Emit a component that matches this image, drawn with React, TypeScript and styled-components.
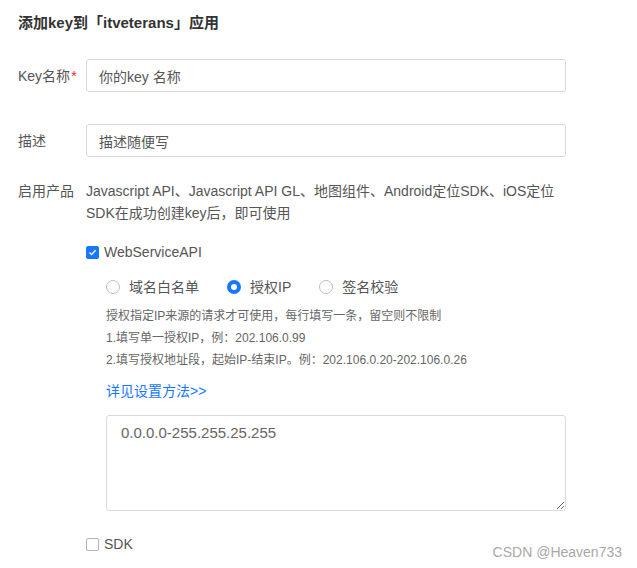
import React from "react"
import styled, { createGlobalStyle } from "styled-components"

const GlobalStyle = createGlobalStyle`
  html, body {
    margin: 0;
    padding: 0;
    background: #fff;
  }
  body {
    font-family: "Liberation Sans", "Noto Sans CJK SC", sans-serif;
    color: #333;
  }
`

const Page = styled.div`
  position: relative;
  width: 637px;
  height: 568px;
  padding: 14px 0 0 18px;
  box-sizing: border-box;
  overflow: hidden;
`

const Title = styled.h2`
  margin: 0 0 27px;
  font-size: 15px;
  line-height: 18px;
  font-weight: 600;
  color: #333;
`

const Row = styled.div<{ $gap?: number; $top?: boolean }>`
  display: grid;
  grid-template-columns: 68px 480px;
  align-items: ${p => (p.$top ? "start" : "center")};
  margin-bottom: ${p => p.$gap ?? 0}px;
`

const Label = styled.label`
  font-size: 14px;
  line-height: 22px;
  color: #555;
  white-space: nowrap;
`

const Star = styled.span`
  color: #f5222d;
  margin-left: 1px;
`

const Input = styled.input`
  box-sizing: border-box;
  width: 480px;
  height: 33px;
  padding: 0 12px;
  border: 1px solid #d9d9d9;
  border-radius: 3px;
  font-family: inherit;
  font-size: 14px;
  color: #555;
  outline: none;
`

const Products = styled.div`
  display: flex;
  flex-direction: column;
`

const ProductText = styled.div`
  font-size: 14px;
  line-height: 22px;
  color: #555;
  white-space: nowrap;
`

const CheckLine = styled.div<{ $space: number }>`
  display: flex;
  align-items: center;
  gap: 5px;
  margin-top: ${p => p.$space}px;
  font-size: 14px;
  line-height: 20px;
  color: #555;
`

const Box = styled.span<{ $checked?: boolean }>`
  box-sizing: border-box;
  width: 13px;
  height: 13px;
  border-radius: 2px;
  border: 1px solid ${p => (p.$checked ? "#1677ff" : "#b5b5b5")};
  background: ${p => (p.$checked ? "#1677ff" : "#fff")};
  display: flex;
  align-items: center;
  justify-content: center;
`

const Nested = styled.div`
  padding-left: 20px;
  display: flex;
  flex-direction: column;
`

const RadioGroup = styled.div`
  display: flex;
  align-items: center;
  margin: 15px 0 8px;
  line-height: 20px;
`

const RadioItem = styled.div`
  display: flex;
  align-items: center;
  gap: 9px;
  margin-right: 28px;
  font-size: 14px;
  color: #555;
`

const Dot = styled.span<{ $on?: boolean }>`
  box-sizing: border-box;
  width: 14px;
  height: 14px;
  border-radius: 50%;
  border: ${p => (p.$on ? "4px solid #1677ff" : "1px solid #bfbfbf")};
  background: #fff;
`

const Help = styled.div`
  font-size: 12px;
  line-height: 22px;
  color: #666;
`

const Link = styled.a`
  display: block;
  margin: 9px 0 13px;
  font-size: 14px;
  line-height: 22px;
  color: #1677ff;
  text-decoration: none;
`

const TextArea = styled.textarea`
  box-sizing: border-box;
  width: 460px;
  height: 96px;
  padding: 7px 14px;
  border: 1px solid #d9d9d9;
  border-radius: 3px;
  font-family: inherit;
  font-size: 15px;
  line-height: 20px;
  color: #666;
  outline: none;
  display: block;
`

const Watermark = styled.div`
  position: absolute;
  right: 15px;
  bottom: 8px;
  font-family: "Liberation Sans", "Noto Sans", sans-serif;
  font-size: 14px;
  color: #a8a8a8;
`

const Tick = () => (
  <svg width="9" height="9" viewBox="0 0 9 9">
    <path d="M1.5 4.6 L3.6 6.6 L7.6 2.2" stroke="#fff" strokeWidth="1.4" fill="none" />
  </svg>
)

export default function App() {
  return (
    <>
      <GlobalStyle />
      <Page>
        <Title>添加key到「itveterans」应用</Title>
        <Row $gap={32}>
          <Label>
            Key名称<Star>*</Star>
          </Label>
          <Input defaultValue="你的key 名称" />
        </Row>
        <Row $gap={23}>
          <Label>描述</Label>
          <Input defaultValue="描述随便写" />
        </Row>
        <Row $top>
          <Label>启用产品</Label>
          <Products>
            <ProductText>
              Javascript API、Javascript API GL、地图组件、Android定位SDK、iOS定位
            </ProductText>
            <ProductText>SDK在成功创建key后，即可使用</ProductText>
            <CheckLine $space={18}>
              <Box $checked>
                <Tick />
              </Box>
              WebServiceAPI
            </CheckLine>
            <Nested>
              <RadioGroup>
                <RadioItem>
                  <Dot />
                  域名白名单
                </RadioItem>
                <RadioItem>
                  <Dot $on />
                  授权IP
                </RadioItem>
                <RadioItem>
                  <Dot />
                  签名校验
                </RadioItem>
              </RadioGroup>
              <Help>授权指定IP来源的请求才可使用，每行填写一条，留空则不限制</Help>
              <Help>1.填写单一授权IP，例：202.106.0.99</Help>
              <Help>2.填写授权地址段，起始IP-结束IP。例：202.106.0.20-202.106.0.26</Help>
              <Link href="#">详见设置方法&gt;&gt;</Link>
              <TextArea defaultValue="0.0.0.0-255.255.25.255" />
            </Nested>
            <CheckLine $space={23}>
              <Box />
              SDK
            </CheckLine>
          </Products>
        </Row>
        <Watermark>CSDN @Heaven733</Watermark>
      </Page>
    </>
  )
}
